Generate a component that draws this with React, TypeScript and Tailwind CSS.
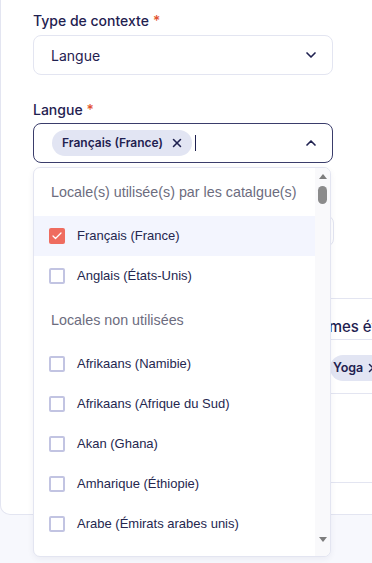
import { ChevronDown, ChevronUp, X, Check } from "lucide-react";

const USED = [
  { label: "Français (France)", checked: true },
  { label: "Anglais (États-Unis)", checked: false },
];

const UNUSED = [
  "Afrikaans (Namibie)",
  "Afrikaans (Afrique du Sud)",
  "Akan (Ghana)",
  "Amharique (Éthiopie)",
  "Arabe (Émirats arabes unis)",
];

const inter = "font-['Inter','Noto_Sans',sans-serif]";
const arial = "font-['Liberation_Sans','Arial',sans-serif]";

function Label({ children }: { children: React.ReactNode }) {
  return (
    <div className={`${inter} text-[14px] font-medium leading-5 text-[#1f2150]`}>
      {children}
      <span className="ml-1 text-[#e2522f]">*</span>
    </div>
  );
}

function Checkbox({ checked }: { checked: boolean }) {
  if (checked) {
    return (
      <span className="flex size-4 shrink-0 items-center justify-center rounded-[2px] bg-[#ef6c5f]">
        <Check className="size-3 text-white" strokeWidth={2.5} />
      </span>
    );
  }
  return <span className="size-4 shrink-0 rounded-[2px] border-2 border-[#c2c4e2] bg-white" />;
}

function Option({ label, checked = false, active = false }: { label: string; checked?: boolean; active?: boolean }) {
  return (
    <div className={`flex h-10 items-center gap-3 pl-[15px] ${active ? "bg-[#f3f5fe]" : ""}`}>
      <Checkbox checked={checked} />
      <span className={`${arial} text-[13px] text-[#25274f]`}>{label}</span>
    </div>
  );
}

function GroupHeader({ children }: { children: React.ReactNode }) {
  return (
    <div className={`flex h-12 items-center pl-[17px] pt-[2px] ${arial} text-[14.3px] text-[#6c6c7e]`}>{children}</div>
  );
}

function Chip({ children, className = "" }: { children: React.ReactNode; className?: string }) {
  return (
    <span className={`inline-flex h-[26px] shrink-0 items-center rounded-full bg-[#e2e5f3] pr-[8px] ${inter} font-semibold text-[#1f2150] ${className}`}>
      {children}
      <X className="size-[14px]" strokeWidth={2.6} />
    </span>
  );
}

function LocaleMenu() {
  return (
    <div className="absolute left-[33px] top-[167px] flex h-[390px] w-[298px] overflow-hidden rounded-[7px] border border-[#e3e5f1] bg-white shadow-[0_2px_6px_rgba(30,33,80,0.06)]">
      <div className="flex-1 overflow-hidden">
        <GroupHeader>Locale(s) utilisée(s) par les catalgue(s)</GroupHeader>
        {USED.map((o, i) => (
          <Option key={o.label} label={o.label} checked={o.checked} active={i === 0} />
        ))}
        <GroupHeader>Locales non utilisées</GroupHeader>
        {UNUSED.map((l) => (
          <Option key={l} label={l} />
        ))}
      </div>
      {/* scrollbar */}
      <div className="flex w-[15px] flex-col items-center bg-[#f9f9fb] pt-[6px] pb-[14px]">
        <span className="h-0 w-0 border-x-[4px] border-b-[5px] border-x-transparent border-b-[#7d7d7d]" />
        <span className="mt-[7px] h-[18px] w-[9px] rounded-full bg-[#8b8b8b]" />
        <span className="flex-1" />
        <span className="h-0 w-0 border-x-[4px] border-t-[5px] border-x-transparent border-t-[#7d7d7d]" />
      </div>
    </div>
  );
}

export default function App() {
  return (
    <div className="relative h-[563px] w-[372px] overflow-hidden bg-[#f7f8fd]">
      <div className="h-[515px] w-[420px] rounded-bl-[10px] border border-t-0 border-[#e3e5f1] bg-white">
        <div className="pl-[32px] pt-[11px]">
          <Label>Type de contexte</Label>
          <div className="mt-[4px] flex h-10 w-[300px] items-center justify-between rounded-[8px] border border-[#e3e5f1] pl-[17px] pr-[13px]">
            <span className={`${inter} text-[14px] text-[#1f2150]`}>Langue</span>
            <ChevronDown className="size-4 text-[#1f2150]" strokeWidth={2.5} />
          </div>

          <div className="mt-[25px]">
            <Label>Langue</Label>
          </div>
          <div className="mt-[3px] flex h-10 w-[300px] items-center justify-between rounded-[8px] border border-[#3a3d6b] pl-[18px] pr-[13px]">
            <div className="flex items-center">
              <Chip className="gap-[7px] pl-[10px] text-[12px]">Français (France)</Chip>
              <span className="ml-[3px] h-4 w-px bg-[#1f2150]" />
            </div>
            <ChevronUp className="size-4 text-[#1f2150]" strokeWidth={2.5} />
          </div>

          {/* field hidden behind the menu */}
          <div className="mt-[52px] h-8 w-[301px] rounded-[8px] border border-[#e3e5f1]" />

          {/* table behind the menu */}
          <div className="mt-[51px] w-[400px] border-t border-[#e3e5f1]">
            <div className={`h-[40px] whitespace-nowrap pl-[268px] pt-[18px] ${inter} text-[15px] font-medium leading-5 text-[#1f2150]`}>
              Thèmes étudiés
            </div>
            <div className="h-[54px] border-t border-[#e3e5f1] pl-[297px] pt-[14px]">
              <Chip className="gap-[3px] pl-[3px] text-[12.5px]">Yoga</Chip>
            </div>
            <div className="h-[89px] border-t border-[#e3e5f1]" />
            <div className="border-t border-[#e3e5f1]" />
          </div>
        </div>
      </div>
      <LocaleMenu />
    </div>
  );
}
